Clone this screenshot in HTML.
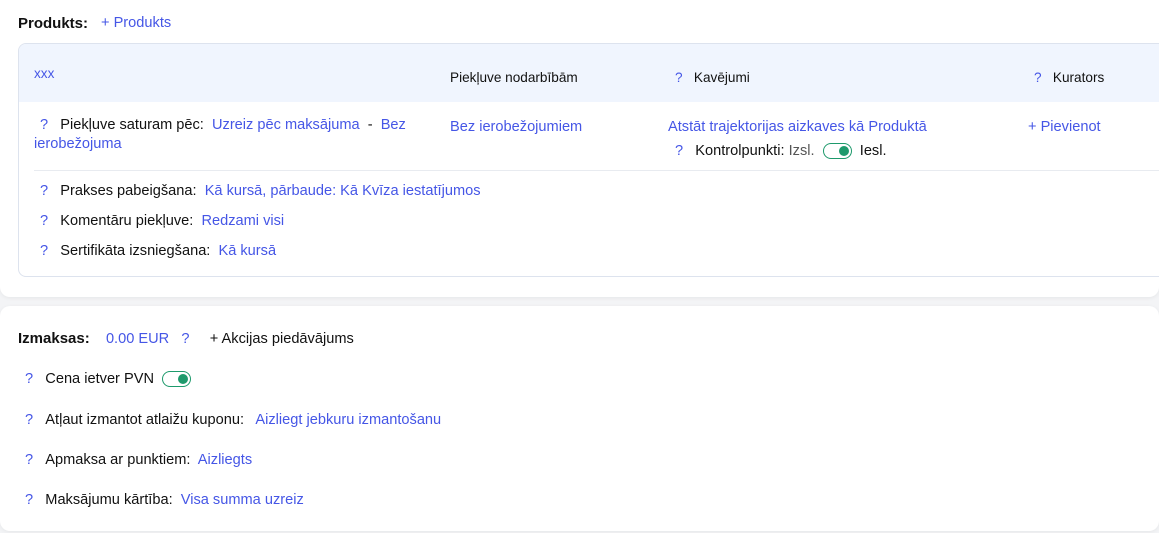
<!DOCTYPE html>
<html><head><meta charset="utf-8"><style>
*{margin:0;padding:0;box-sizing:border-box}
body{width:1159px;height:533px;background:#f3f4f6;font-family:"Liberation Sans",sans-serif;font-size:14.6px;color:#111;position:relative;overflow:hidden}
.card{position:absolute;left:0;background:#fff;box-shadow:0 1px 4px rgba(0,0,0,.06)}
.a{position:absolute;white-space:nowrap}
.b{color:#4556e6}
.q{color:#4556e6}
.bold{font-weight:bold;font-size:15px}
.tog{display:inline-block;width:29px;height:16px;border:1.5px solid #1e9a6c;border-radius:9px;position:relative;vertical-align:middle}
.tog:after{content:"";position:absolute;right:2px;top:2px;width:10px;height:10px;border-radius:50%;background:#1e9a6c}
</style></head><body>
<div class="card" style="top:0;width:1159px;height:297px;border-radius:0 0 10px 10px"></div>
<div class="card" style="top:306px;width:1159px;height:225px;border-radius:10px"></div>
<div style="position:absolute;left:18px;top:43px;width:1160px;height:234px;border:1px solid #dde3ee;border-radius:8px;background:#fff;overflow:hidden">
<div style="height:58px;background:#f0f5fe"></div>
<div style="position:absolute;left:15px;top:126px;width:1140px;height:1px;background:#e8ebf0"></div>
</div>
<div class="a bold" style="left:18px;top:15px">Produkts:</div>
<div class="a b" style="left:101px;top:15px">+ Produkts</div>
<div class="a b" style="left:34px;top:66px;font-size:13.6px">xxx</div>
<div class="a" style="left:450px;top:70px;font-size:13.6px">Piekļuve nodarbībām</div>
<div class="a" style="left:675px;top:70px;font-size:13.6px"><span class="q">?</span>&nbsp;&nbsp;&nbsp;Kavējumi</div>
<div class="a" style="left:1034px;top:70px;font-size:13.6px"><span class="q">?</span>&nbsp;&nbsp;&nbsp;Kurators</div>
<div class="a" style="left:40px;top:117px"><span class="q">?</span>&nbsp;&nbsp;&nbsp;Piekļuve saturam pēc:&nbsp;&nbsp;<span class="b">Uzreiz pēc maksājuma</span>&nbsp; - &nbsp;<span class="b">Bez</span></div>
<div class="a b" style="left:34px;top:136px">ierobežojuma</div>
<div class="a b" style="left:450px;top:119px">Bez ierobežojumiem</div>
<div class="a b" style="left:668px;top:119px">Atstāt trajektorijas aizkaves kā Produktā</div>
<div class="a" style="left:675px;top:143px"><span class="q">?</span>&nbsp;&nbsp;&nbsp;Kontrolpunkti:&nbsp;<span style="color:#555">Izsl.</span>&nbsp; <span class="tog"></span>&nbsp; Iesl.</div>
<div class="a b" style="left:1028px;top:119px">+ Pievienot</div>
<div class="a" style="left:40px;top:183px"><span class="q">?</span>&nbsp;&nbsp;&nbsp;Prakses pabeigšana:&nbsp;&nbsp;<span class="b">Kā kursā, pārbaude: Kā Kvīza iestatījumos</span></div>
<div class="a" style="left:40px;top:213px"><span class="q">?</span>&nbsp;&nbsp;&nbsp;Komentāru piekļuve:&nbsp;&nbsp;<span class="b">Redzami visi</span></div>
<div class="a" style="left:40px;top:243px"><span class="q">?</span>&nbsp;&nbsp;&nbsp;Sertifikāta izsniegšana:&nbsp;&nbsp;<span class="b">Kā kursā</span></div>
<div class="a" style="left:18px;top:330px"><span class="bold">Izmaksas:</span>&nbsp;&nbsp;&nbsp;&nbsp;<span class="b">0.00 EUR</span>&nbsp;&nbsp;&nbsp;<span class="q">?</span>&nbsp;&nbsp;&nbsp;&nbsp; + Akcijas piedāvājums</div>
<div class="a" style="left:25px;top:371px"><span class="q">?</span>&nbsp;&nbsp;&nbsp;Cena ietver PVN&nbsp;&nbsp;<span class="tog"></span></div>
<div class="a" style="left:25px;top:412px"><span class="q">?</span>&nbsp;&nbsp;&nbsp;Atļaut izmantot atlaižu kuponu:&nbsp;&nbsp; <span class="b">Aizliegt jebkuru izmantošanu</span></div>
<div class="a" style="left:25px;top:452px"><span class="q">?</span>&nbsp;&nbsp;&nbsp;Apmaksa ar punktiem:&nbsp; <span class="b">Aizliegts</span></div>
<div class="a" style="left:25px;top:492px"><span class="q">?</span>&nbsp;&nbsp;&nbsp;Maksājumu kārtība:&nbsp; <span class="b">Visa summa uzreiz</span></div>
</body></html>
